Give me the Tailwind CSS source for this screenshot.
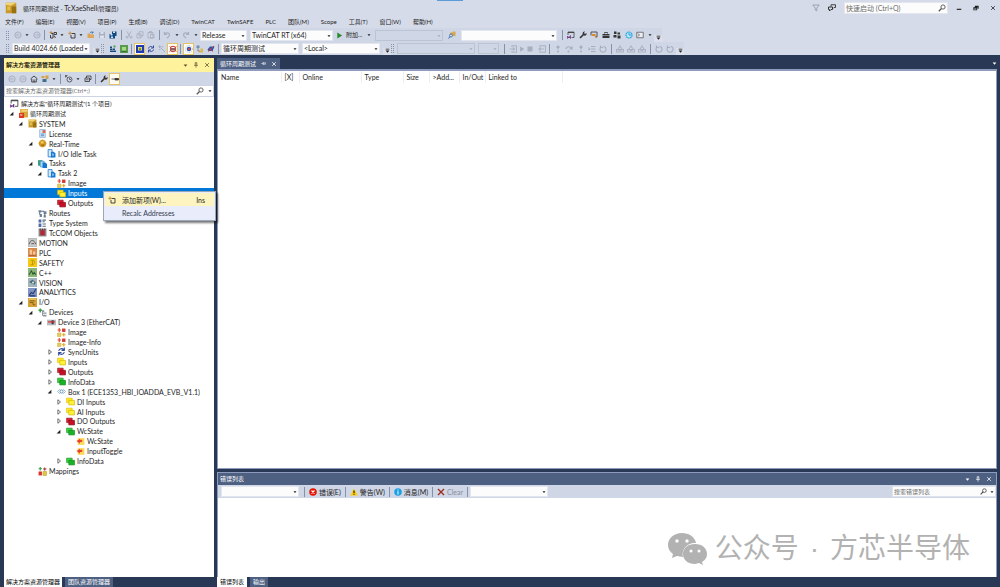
<!DOCTYPE html>
<html lang="zh-CN">
<head>
  <meta charset="UTF-8" />
  <meta name="viewport" content="width=device-width, initial-scale=1.0" />
  <title>循环周期测试 - TcXaeShell(管理员)</title>
  <script src="https://cdn.jsdelivr.net/npm/@tailwindcss/browser@4"></script>
</head>
<body class="flex h-screen flex-col overflow-hidden bg-[#293955] font-['Lato','Noto_Sans_CJK_SC',sans-serif] text-[7px] leading-[10px] text-[#1e1e1e]">

  <!-- Icon sprite -->
  <svg class="hidden">
    <symbol id="caret" viewBox="0 0 8 8"><path d="M1 2.5h6L4 6z" fill="currentColor"/></symbol>
    <symbol id="more" viewBox="0 0 8 8"><path d="M1 1h6v1.3H1zM1 4h6L4 7.5z" fill="currentColor"/></symbol>
    <symbol id="close" viewBox="0 0 16 16"><path d="M3 3l10 10M13 3L3 13" stroke="currentColor" stroke-width="2"/></symbol>
    <symbol id="pin" viewBox="0 0 16 16"><path d="M5 2h6M6 2v7M10 2v7M3 9h10M8 9v6" stroke="currentColor" stroke-width="1.8" fill="none"/></symbol>
    <symbol id="search" viewBox="0 0 16 16"><circle cx="10" cy="6" r="4.2" fill="none" stroke="currentColor" stroke-width="1.8"/><path d="M7 9l-5.5 5.5" stroke="currentColor" stroke-width="2.4"/></symbol>
    <symbol id="min" viewBox="0 0 16 16"><path d="M2 10h12v3H2z" fill="currentColor"/></symbol>
    <symbol id="restore" viewBox="0 0 16 16"><path d="M5 2h10v8h-3V6H5zM1 6h10v8H1z" fill="currentColor"/><path d="M3 9.5h6V12H3z" fill="#d6dbe9"/></symbol>
    <symbol id="filter" viewBox="0 0 16 16"><path d="M1.5 2h13L9.5 8v6l-3-2V8z" fill="none" stroke="#8b92a5" stroke-width="1.5"/></symbol>
    <symbol id="feedback" viewBox="0 0 16 16"><path d="M6 5V1.5h9V7h-3l-2 2" fill="none" stroke="#333" stroke-width="1.8"/><path d="M1 6h8v5H6l-3 3v-3H1z" fill="none" stroke="#333" stroke-width="2"/></symbol>
    <symbol id="back" viewBox="0 0 16 16"><circle cx="8" cy="8" r="6" fill="none" stroke="#adb3c3" stroke-width="2.4"/><path d="M11.5 8H5m3-3L5 8l3 3" fill="none" stroke="#adb3c3" stroke-width="1.8"/></symbol>
    <symbol id="fwd" viewBox="0 0 16 16"><circle cx="8" cy="8" r="6" fill="none" stroke="#adb3c3" stroke-width="2.4"/><path d="M4.500 8H11M8 5l3 3-3 3" fill="none" stroke="#adb3c3" stroke-width="1.8"/></symbol>
    <symbol id="newproj" viewBox="0 0 16 16"><path d="M4 5h4v9H3V8m7-5h5v4h-5zM10 9l3 5" fill="none" stroke="#333" stroke-width="1.8"/><path d="M4 0v6M1 3h6" stroke="#c58a35" stroke-width="1.8"/></symbol>
    <symbol id="newitem" viewBox="0 0 16 16"><path d="M7 5h7v9H6V8" fill="none" stroke="#333" stroke-width="1.8"/><path d="M4 1v7M.5 4.500h7" stroke="#c58a35" stroke-width="1.8"/></symbol>
    <symbol id="open" viewBox="0 0 16 16"><path d="M1 5h5l1 2h7v7H1z" fill="#dba75a"/><path d="M6 4c1-3 5-3 6 0m0-3v3H9" fill="none" stroke="#2b6cb0" stroke-width="1.6"/></symbol>
    <symbol id="save" viewBox="0 0 16 16"><path d="M2 2h12v12H2z" fill="#a9afc0"/><path d="M5 2h6v4H5zM4 9h8v5H4z" fill="#dde1ec"/></symbol>
    <symbol id="saveall" viewBox="0 0 16 16"><path d="M6 1h9v9h-3v5H1V6h5z" fill="#0c4b86"/><path d="M8 1h4v3H8zM3 6h4v3H3zM4 11h4v3H4z" fill="#dde1ec"/></symbol>
    <symbol id="cut" viewBox="0 0 16 16"><path d="M4 1l6 10M12 1L6 11" stroke="#adb3c3" stroke-width="2"/><circle cx="4" cy="12.500" r="2" fill="none" stroke="#adb3c3" stroke-width="2"/><circle cx="12" cy="12.500" r="2" fill="none" stroke="#adb3c3" stroke-width="2"/></symbol>
    <symbol id="copy" viewBox="0 0 16 16"><path d="M6 1.500h8V10H6zM2 5.500h8V14H2z" fill="#d3d9e7" stroke="#adb3c3" stroke-width="2"/></symbol>
    <symbol id="paste" viewBox="0 0 16 16"><path d="M2 3h10v11H2zM5 1h4v3H5zM7 7h7v7H7z" fill="#d3d9e7" stroke="#adb3c3" stroke-width="2"/></symbol>
    <symbol id="undo" viewBox="0 0 16 16"><path d="M3 2v5h5M3 7c3-5 10-4 10 1 0 3-3 4-5 6" fill="none" stroke="#a7aec0" stroke-width="2.400"/></symbol>
    <symbol id="redo" viewBox="0 0 16 16"><path d="M13 2v5H8M13 7C10 2 3 3 3 8c0 3 3 4 5 6" fill="none" stroke="#a7aec0" stroke-width="2.400"/></symbol>
    <symbol id="play" viewBox="0 0 16 16"><path d="M3 1l11 7-11 7z" fill="currentColor"/></symbol>
    <symbol id="find" viewBox="0 0 16 16"><path d="M4 3h5l1-2h5v9H4z" fill="#d9a64f"/><circle cx="6" cy="9" r="3" fill="#d6dbe9" stroke="#2b6ca8" stroke-width="1.6"/><path d="M4 11l-3 4" stroke="#2b6ca8" stroke-width="2"/></symbol>
    <symbol id="vswin" viewBox="0 0 16 16"><path d="M2 8V2h12v11H9" fill="none" stroke="#444" stroke-width="1.6"/><path d="M2 3h12" stroke="#444" stroke-width="2"/><path d="M1 10l3 3 3-4v6l-3-3-3 3z" fill="#68217a" stroke="#68217a"/></symbol>
    <symbol id="wrench" viewBox="0 0 16 16"><path d="M2 14l7-7" stroke="#333" stroke-width="3.200"/><path d="M8 2c2-2 4-1 4-1L10 4l2 2 3-2c1 4-2 6-5 5L7 6z" fill="#333"/></symbol>
    <symbol id="toolwin" viewBox="0 0 16 16"><path d="M2 9V2h12v10h-3" fill="none" stroke="#444" stroke-width="1.800"/><path d="M4 6h7v3l3 5-3-1-2-3H4z" fill="#d98a2b"/></symbol>
    <symbol id="toolbox" viewBox="0 0 16 16"><path d="M5 5V3h6v2" fill="none" stroke="#333" stroke-width="1.600"/><path d="M1 6h14v3H1zM1 10h14v4H1z" fill="#333"/></symbol>
    <symbol id="blocks" viewBox="0 0 16 16"><path d="M2 1h5v5H2zM9 3h5v4H9zM1 8h6v5H1zM9 9h6v6H9z" fill="#333"/></symbol>
    <symbol id="globe" viewBox="0 0 16 16"><circle cx="8" cy="8" r="6" fill="#bfe7f8" stroke="#1ba1e2" stroke-width="2.400" stroke-dasharray="3 1"/><path d="M8 4v4h5" fill="none" stroke="#1ba1e2" stroke-width="2"/></symbol>
    <symbol id="console" viewBox="0 0 16 16"><path d="M1.500 2.500h13v11h-13z" fill="#e9ecf4" stroke="#555" stroke-width="1.500"/><path d="M4 5l3 3-3 3" fill="none" stroke="#444" stroke-width="1.500"/></symbol>
    <symbol id="activate" viewBox="0 0 16 16"><path d="M2 3h4v3H2zM2 7h4v3H2zM2 11h12v3H2zM7 7h5v3H7z" fill="#164a7a"/><path d="M9 1h4v4H9z" fill="#4a9a55"/></symbol>
    <symbol id="target" viewBox="0 0 16 16"><path d="M0 0h16v16H0z" fill="#5a9a50"/><path d="M4 4h8v7H4z" fill="#a5dc7c"/><path d="M3 12h10v2H3z" fill="#356d37"/></symbol>
    <symbol id="runmode" viewBox="0 0 16 16"><path d="M0 0h16v16H0z" fill="#2339b5"/><path d="M4 4h8v7H4z" fill="#dce36c"/><circle cx="8" cy="8" r="2.500" fill="#7d9330"/></symbol>
    <symbol id="sync" viewBox="0 0 16 16"><path d="M3 7c1-5 7-5 9-2m1-4v5H8M13 9c-1 5-7 5-9 2m-1 4v-5h5" fill="none" stroke="#304a9b" stroke-width="2"/></symbol>
    <symbol id="wand" viewBox="0 0 16 16"><path d="M5 5l9 9M3 1v5M1 3h5M10 2l-2 3M2 10l3-2" stroke="#a7aec0" stroke-width="2"/></symbol>
    <symbol id="free" viewBox="0 0 16 16"><circle cx="8" cy="8" r="5.500" fill="none" stroke="#c93535" stroke-width="2"/><path d="M4 6h8v5H4z" fill="#7f6a6a"/><path d="M1 3l3 2M15 3l-3 2M1 13l3-2M15 13l-3-2" stroke="#c93535" stroke-width="1.600"/></symbol>
    <symbol id="scan" viewBox="0 0 16 16"><circle cx="8" cy="8" r="4.500" fill="#2d57b5"/><circle cx="8" cy="8" r="6.800" fill="none" stroke="#8a9ed2" stroke-width="1.400" stroke-dasharray="2 2"/><path d="M6 6h4v4H6z" fill="#c34b4b"/></symbol>
    <symbol id="link" viewBox="0 0 16 16"><path d="M1 1h6v5H1z" fill="#7b8bb0"/><path d="M9 7h5v4H9zM6 11h8v4H6z" fill="#dcb84c"/><path d="M4 6v6h3" fill="none" stroke="#667" stroke-width="1.400"/></symbol>
    <symbol id="stoplink" viewBox="0 0 16 16"><path d="M1 9l5-6h9l-4 9H3z" fill="#1f56b0"/><path d="M2 13L14 2M5 7l7 6" stroke="#d23b3b" stroke-width="2"/></symbol>
    <symbol id="login" viewBox="0 0 16 16"><path d="M6 4V1.500h9v13H6V12M1 8h10M8 5l3 3-3 3" fill="none" stroke="#adb3c3" stroke-width="2.200"/></symbol>
    <symbol id="logout" viewBox="0 0 16 16"><path d="M4 4V1.500h11v13H4V12M12 8H2m3-3L2 8l3 3" fill="none" stroke="#adb3c3" stroke-width="2.200"/></symbol>
    <symbol id="stop" viewBox="0 0 16 16"><path d="M3 3h10v10H3z" fill="#a7aec0"/></symbol>
    <symbol id="stepin" viewBox="0 0 16 16"><path d="M8 1v8M5 5l3-3 3 3" stroke="#a7aec0" stroke-width="2.400" fill="none"/><circle cx="8" cy="13" r="2" fill="#a7aec0"/></symbol>
    <symbol id="stepover" viewBox="0 0 16 16"><path d="M2 8c1-6 10-6 11 0M14 3v5H9" stroke="#a7aec0" stroke-width="2.400" fill="none"/><circle cx="7" cy="13" r="2" fill="#a7aec0"/></symbol>
    <symbol id="lines" viewBox="0 0 16 16"><path d="M6 3h9M6 8h9M6 13h9" stroke="#a7aec0" stroke-width="2.200"/><path d="M1 4l4 4-4 4z" fill="#a7aec0"/></symbol>
    <symbol id="cycle" viewBox="0 0 16 16"><path d="M4 4a6 6 0 1 0 8 0M3 1v4h5M9 3l4 1" fill="none" stroke="#a7aec0" stroke-width="2.200"/></symbol>
    <symbol id="house" viewBox="0 0 16 16"><path d="M1 9h14v5H1zM4 8l4-6 4 6" fill="none" stroke="#adb3c3" stroke-width="2.200"/><path d="M5 9h6v3H5z" fill="#adb3c3"/></symbol>
    <symbol id="home" viewBox="0 0 16 16"><path d="M1 8l7-6 7 6M3.500 8v6h9V8" fill="none" stroke="#333" stroke-width="1.800"/><path d="M7 9h2v5H7z" fill="#333"/></symbol>
    <symbol id="view" viewBox="0 0 16 16"><path d="M1 2h6v4H1zM9 1h6v7H9z" fill="#d3a24c"/><path d="M3 8h8v6H3z" fill="#3d7091"/></symbol>
    <symbol id="pending" viewBox="0 0 16 16"><circle cx="9" cy="9" r="5" fill="none" stroke="#444" stroke-width="1.600"/><path d="M9 6v3h3M1 1l4 4M1 5V1h4" fill="none" stroke="#444" stroke-width="1.500"/></symbol>
    <symbol id="collapse" viewBox="0 0 16 16"><path d="M5 6V2h9v7h-3M2 6h9v7H2z" fill="none" stroke="#444" stroke-width="1.800"/><path d="M4 9.500h5" stroke="#444" stroke-width="1.500"/></symbol>
    <symbol id="dash" viewBox="0 0 16 16"><path d="M1 8h14M8 7h7v3H8z" stroke="#333" stroke-width="1.500" fill="#333"/></symbol>
    <symbol id="err" viewBox="0 0 16 16"><circle cx="8" cy="8" r="7.500" fill="#e41300"/><path d="M5 5l6 6M11 5l-6 6" stroke="#fff" stroke-width="2.200"/></symbol>
    <symbol id="warn" viewBox="0 0 16 16"><path d="M8 1l7.500 14H.5z" fill="#fc0"/><path d="M7 5h2v5H7zM7 11.500h2v2H7z" fill="#000"/></symbol>
    <symbol id="info" viewBox="0 0 16 16"><circle cx="8" cy="8" r="7.500" fill="#1ba1e2"/><path d="M7 3h2v2H7zM7 6.500h2V13H7z" fill="#fff"/></symbol>
    <symbol id="clear" viewBox="0 0 16 16"><path d="M2 2l12 12M14 2L2 14" stroke="#9b2b1c" stroke-width="2.600"/></symbol>
    <!-- tree icons -->
    <symbol id="logo" viewBox="0 0 16 16"><path d="M1 1h14v14H1z" fill="#c79a2b"/><path d="M1 1h14L8 5 1 4z" fill="#f0d377"/><path d="M9 6h6v9H9z" fill="#9a7013"/><path d="M3 6h4v5H3z" fill="#e6bd4e"/></symbol>
    <symbol id="project" viewBox="0 0 16 16"><path d="M2 0h14v15H2z" fill="#d6a93a"/><path d="M4 1h11v4H4z" fill="#f0d377"/><path d="M0 7h9v9H0z" fill="#d93a20"/><path d="M2 9h4v3H2z" fill="#f7a48a"/></symbol>
    <symbol id="license" viewBox="0 0 16 16"><path d="M3 1h10v14H3z" fill="#d9e9f8" stroke="#6b9ac6"/><path d="M5 9h6M5 12h6" stroke="#3b7dc4" stroke-width="1.500"/><path d="M8 2h5v5H8z" fill="#e0664c"/></symbol>
    <symbol id="gear" viewBox="0 0 16 16"><path d="M8 1l5 2 2 5-2 5-5 2-5-2-2-5 2-5z" fill="#cf9620"/><path d="M5 4h5v4H5z" fill="#f3cb5c"/><path d="M6 11h5" stroke="#946511" stroke-width="2"/></symbol>
    <symbol id="task" viewBox="0 0 16 16"><path d="M2 1h7v13H2z" fill="#dbeafa" stroke="#2a7fd0" stroke-width="1.500"/><path d="M7 5h5l3 3v7H7z" fill="#1579d1"/><path d="M9 8h3v4H9z" fill="#8cc7f5"/></symbol>
    <symbol id="tasks" viewBox="0 0 16 16"><path d="M0 2h8v10H0z" fill="#3f9e7e"/><path d="M4 4h7v10H4z" fill="#b9dcf5" stroke="#2a7fd0"/><path d="M8 6h5l3 3v7H8z" fill="#1579d1"/></symbol>
    <symbol id="image" viewBox="0 0 16 16"><path d="M9 1h6v6H9z" fill="#d23a32"/><path d="M1 9h6v6H1z" fill="#e8cf60" stroke="#c9a732"/><path d="M4 0v7M1 3.500h6" stroke="#e24a32" stroke-width="2"/><path d="M12 9v6M9 12h6" stroke="#e9a820" stroke-width="2"/></symbol>
    <symbol id="ystack" viewBox="0 0 16 16"><path d="M1 2h10v8H1z" fill="#ffeb1c" stroke="#d8b800"/><path d="M5 6h10v8H5z" fill="#fff23a" stroke="#d8b800" stroke-width="1.300"/></symbol>
    <symbol id="rstack" viewBox="0 0 16 16"><path d="M1 2h10v8H1z" fill="#dc1f32" stroke="#8c0c1a"/><path d="M5 6h10v8H5z" fill="#c90f26" stroke="#8c0c1a" stroke-width="1.300"/></symbol>
    <symbol id="gstack" viewBox="0 0 16 16"><path d="M1 2h10v8H1z" fill="#39d242" stroke="#178a20"/><path d="M5 6h10v8H5z" fill="#17b526" stroke="#178a20" stroke-width="1.300"/></symbol>
    <symbol id="routes" viewBox="0 0 16 16"><path d="M1 2h5v4H1zM10 4h5v5h-5zM3 9h4v5H3zM10 11h4v4h-4z" fill="#6c8296"/><path d="M3 6v4M12 8v4M6 4h5" stroke="#38506a" stroke-width="1.500"/></symbol>
    <symbol id="types" viewBox="0 0 16 16"><path d="M1 1h5v5H1zM1 8h5v6H1z" fill="#506dab"/><path d="M8 2h6M8 5h4M8 9h6M8 13h6" stroke="#5b6c80" stroke-width="1.800"/></symbol>
    <symbol id="tccom" viewBox="0 0 16 16"><path d="M1 1h14v14H1z" fill="#8c8588"/><path d="M4 4h8v9H4z" fill="#b02835"/><path d="M4 1v3M8 1v3M12 1v3" stroke="#402d32" stroke-width="1.500"/></symbol>
    <symbol id="motion" viewBox="0 0 16 16"><path d="M.5.500h15v15H.5z" fill="#c8c9ca" stroke="#999"/><path d="M2 11c3-9 8-9 12 0M6 10h5" stroke="#555" stroke-width="1.600" fill="none"/></symbol>
    <symbol id="plc" viewBox="0 0 16 16"><path d="M0 0h16v16H0z" fill="#d98a4a"/><path d="M3 3h4v9H3zM9 6h4v6H9z" fill="#f6c99d"/><path d="M2 13h12" stroke="#a65626" stroke-width="1.500"/></symbol>
    <symbol id="safety" viewBox="0 0 16 16"><path d="M0 0h16v16H0z" fill="#f5c816"/><path d="M5 4h5l2 4-3 4H4m4-8v8" fill="none" stroke="#c09408" stroke-width="1.600"/></symbol>
    <symbol id="cpp" viewBox="0 0 16 16"><path d="M0 0h16v16H0z" fill="#8cb57a"/><path d="M2 12l4-7 3 6 2-3 3 4" fill="none" stroke="#2d592d" stroke-width="1.800"/></symbol>
    <symbol id="vision" viewBox="0 0 16 16"><path d="M0 0h16v16H0z" fill="#9fb4bb"/><path d="M2 7l6-4 6 5-3 4z" fill="#4b6872"/><circle cx="9" cy="8" r="2" fill="#cfe1e6"/></symbol>
    <symbol id="analytics" viewBox="0 0 16 16"><path d="M0 0h16v16H0z" fill="#7f93c2"/><path d="M2 13l4-5 3 2 5-8M3 14h10" fill="none" stroke="#23376d" stroke-width="1.800"/></symbol>
    <symbol id="io" viewBox="0 0 16 16"><path d="M0 0h16v16H0z" fill="#d4a238"/><path d="M3 5h9M3 8h6v4h4" fill="none" stroke="#855c0e" stroke-width="1.600"/><path d="M2 1h12v2H2z" fill="#f2d37a"/></symbol>
    <symbol id="devices" viewBox="0 0 16 16"><path d="M4 1v7M1 4h6" stroke="#359c45" stroke-width="2.400"/><path d="M7 4h4v3H7zM9 8h6v2H9zM9 12h6v3H9z" fill="#8a949d"/><path d="M8 7v7" stroke="#667" stroke-width="1.200"/></symbol>
    <symbol id="device" viewBox="0 0 16 16"><path d="M0 3h16v10H0z" fill="#b8bbbf"/><path d="M8 4h4v7H8z" fill="#43464a"/><path d="M2 7h12" stroke="#d22" stroke-width="2"/></symbol>
    <symbol id="box" viewBox="0 0 16 16"><path d="M5 4L1 8l4 4M11 4l4 4-4 4" fill="none" stroke="#88a7bd" stroke-width="1.500"/><circle cx="8" cy="8" r="2.800" fill="none" stroke="#4a86b0" stroke-width="1.500"/></symbol>
    <symbol id="var" viewBox="0 0 16 16"><path d="M3 2h12v12H3z" fill="#ffd95a"/><path d="M1 7l6-4v2h4v4H7v3z" fill="#e9432a"/></symbol>
    <symbol id="mappings" viewBox="0 0 16 16"><path d="M1 8h6v7H1z" fill="#d93434"/><path d="M9 8h6v7H9z" fill="#e8c73b" stroke="#b89624"/><path d="M4 0v6M1 3h6" stroke="#36a046" stroke-width="2"/><path d="M12 1v5M9 3.500h6" stroke="#a33" stroke-width="2"/></symbol>
    <symbol id="opened" viewBox="0 0 8 8"><path d="M7 1v6H1z" fill="#222"/></symbol>
    <symbol id="closed" viewBox="0 0 8 8"><path d="M2.500 1L6 4 2.500 7z" fill="#fff" stroke="#444"/></symbol>
  </svg>

  <header class="relative shrink-0 bg-[#d6dbe9]">
    <div class="absolute top-0 left-[437px] h-px w-[26px] bg-[#5b9bd8]"></div>
    <!-- Title bar -->
    <div class="flex h-4 items-center gap-2 pr-1 pl-[5px]">
      <div class="flex flex-1 items-center gap-[6px]">
        <svg class="size-3"><use href="#logo"/></svg>
        <h1 class="text-[6px]">循环周期测试 - <span class="text-[7px]">TcXaeShell</span>(管理员)</h1>
      </div>
      <div class="flex w-6 justify-between">
        <button aria-label="筛选"><svg class="size-2"><use href="#filter"/></svg></button>
        <button aria-label="反馈"><svg class="size-2"><use href="#feedback"/></svg></button>
      </div>
      <label class="flex h-3 w-[104px] items-center border border-[#e3e6ee] bg-[#fcfcfc] px-[1px]">
        <input aria-label="快速启动" placeholder="快速启动 (Ctrl+Q)" class="min-w-0 flex-1 outline-none placeholder:text-[#6d6d6d]" />
        <svg class="size-2 text-[#555]"><use href="#search"/></svg>
      </label>
      <div class="flex w-[40px] justify-between">
        <button aria-label="最小化"><svg class="size-[6px]"><use href="#min"/></svg></button>
        <button aria-label="还原"><svg class="size-[6px]"><use href="#restore"/></svg></button>
        <button aria-label="关闭"><svg class="size-[6px]"><use href="#close"/></svg></button>
      </div>
    </div>

    <nav class="flex h-3 items-center gap-3 pl-[5px] text-[6px] whitespace-nowrap">
      <button>文件(F)</button><button>编辑(E)</button><button>视图(V)</button><button>项目(P)</button>
      <button>生成(B)</button><button>调试(D)</button><button>TwinCAT</button><button>TwinSAFE</button>
      <button>PLC</button><button>团队(M)</button><button>Scope</button><button>工具(T)</button>
      <button>窗口(W)</button><button>帮助(H)</button>
    </nav>

    <!-- Toolbars, filled in by the script below -->
    <div id="bar1" class="mr-auto flex h-[14px] w-fit items-center bg-[#cfd6e5] pl-[6px]"></div>
    <div id="bar2" class="mr-auto flex h-[13px] w-fit items-center bg-[#cfd6e5] pl-[6px]"></div>
  </header>

  <main class="flex min-h-0 flex-1 gap-[3px] pt-[3px] pr-[3px] pl-1">
    <!-- Solution explorer -->
    <section class="flex w-[210px] shrink-0 flex-col">
      <div class="flex h-[14px] items-center gap-[5px] bg-[#fff29d] px-[2px] text-[#55502f]">
        <h2 class="flex-1 text-[6px] font-medium text-black">解决方案资源管理器</h2>
        <button aria-label="窗口位置"><svg class="size-[5px]"><use href="#caret"/></svg></button>
        <button aria-label="自动隐藏"><svg class="size-[6px]"><use href="#pin"/></svg></button>
        <button aria-label="关闭" class="pr-[2px]"><svg class="size-[6px]"><use href="#close"/></svg></button>
      </div>
      <div id="treebar" class="flex h-[13px] items-center bg-[#cfd6e5] pl-[2px]"></div>
      <label class="flex h-3 items-center gap-1 border border-[#ccd3e2] bg-white px-[1px]">
        <input aria-label="搜索解决方案资源管理器" placeholder="搜索解决方案资源管理器(Ctrl+;)" class="min-w-0 flex-1 text-[6px] outline-none placeholder:text-[#6d6d6d]" />
        <svg class="size-2 text-[#555]"><use href="#search"/></svg>
        <svg class="size-[4px]"><use href="#caret"/></svg>
      </label>
      <div class="relative min-h-0 flex-1 bg-white pt-[2px]">
        <ul id="tree" role="tree" class="grid h-[377px] auto-rows-fr"></ul>
        <!-- Context menu -->
        <div role="menu" class="absolute top-[94px] left-[99px] z-10 w-[113px] border border-[#9ba7b7] bg-[#e9edfb] p-px shadow-[2px_2px_2px_#0008]">
          <button role="menuitem" class="flex h-[13px] w-full items-center bg-[#fdf4bf] pr-[9px] pl-[3px] text-left">
            <svg class="mr-[6px] size-2"><use href="#newitem"/></svg><span class="flex-1">添加新项(W)...</span><span>Ins</span>
          </button>
          <button role="menuitem" class="flex h-[13px] w-full items-center pl-[17px] text-left text-[#333a4d]">Recalc Addresses</button>
        </div>
      </div>
      <div class="flex h-[10px] text-[6px]">
        <button class="bg-white px-[2px] text-black">解决方案资源管理器</button>
        <button class="ml-[3px] bg-[#4d6082] px-[3px] text-white">团队资源管理器</button>
      </div>
    </section>

    <div class="flex min-w-0 flex-1 flex-col">
      <!-- Document -->
      <div class="flex h-[11px] items-center justify-between">
        <div class="flex h-full items-center gap-[5px] bg-[#4d6082] px-[3px] text-white">
          <button class="text-[6px]">循环周期测试</button>
          <button aria-label="固定" class="rotate-90"><svg class="size-[5px]"><use href="#pin"/></svg></button>
          <button aria-label="关闭"><svg class="size-[6px]"><use href="#close"/></svg></button>
        </div>
        <button aria-label="文档列表" class="text-white"><svg class="size-[5px]"><use href="#caret"/></svg></button>
      </div>
      <div class="min-h-0 flex-1 border border-t-2 border-[#8e9bbc] bg-white">
        <table class="w-[345px] table-fixed text-left">
          <thead>
            <tr class="h-3">
              <th class="w-[63px] border-r border-[#eee] pl-[3px] font-normal">Name</th>
              <th class="w-[18px] border-r border-[#eee] pl-[3px] font-normal">[X]</th>
              <th class="w-[62px] border-r border-[#eee] pl-[3px] font-normal">Online</th>
              <th class="w-[42px] border-r border-[#eee] pl-[3px] font-normal">Type</th>
              <th class="w-[26px] border-r border-[#eee] pl-[3px] font-normal">Size</th>
              <th class="w-[30px] border-r border-[#eee] pl-[3px] font-normal">&gt;Add...</th>
              <th class="w-[26px] border-r border-[#eee] pl-[3px] font-normal">In/Out</th>
              <th class="border-r border-[#eee] pl-[3px] font-normal">Linked to</th>
            </tr>
          </thead>
        </table>
      </div>

      <!-- Error list -->
      <section class="relative mt-[3px] flex h-[105px] shrink-0 flex-col border border-b-0 border-[#8e9bbc]">
        <div class="flex h-3 items-center gap-[5px] bg-[#4d6082] px-[2px] text-white">
          <h2 class="flex-1 text-[6px]">错误列表</h2>
          <button aria-label="窗口位置"><svg class="size-[5px]"><use href="#caret"/></svg></button>
          <button aria-label="自动隐藏"><svg class="size-[6px]"><use href="#pin"/></svg></button>
          <button aria-label="关闭" class="pr-[2px]"><svg class="size-[6px]"><use href="#close"/></svg></button>
        </div>
        <div class="flex h-[13px] items-center bg-[#cfd6e5] pl-[3px]">
          <div id="errbar" class="flex flex-1 items-center"></div>
          <label class="flex h-[11px] w-[104px] items-center gap-[3px] border border-[#dfe3ec] bg-[#fcfcfc] px-[1px]">
            <input aria-label="搜索错误列表" placeholder="搜索错误列表" class="min-w-0 flex-1 text-[6px] outline-none placeholder:text-[#6d6d6d]" />
            <svg class="size-[7px] text-[#444]"><use href="#search"/></svg>
            <svg class="size-[4px]"><use href="#caret"/></svg>
          </label>
        </div>
        <div class="flex-1 bg-white"></div>
        <div class="absolute right-[26px] bottom-2 flex items-center gap-2 text-[28px] leading-[40px] whitespace-nowrap text-[#b2b2b2]">
          <svg class="h-8 w-[39px]" viewBox="0 0 39 32">
            <path d="M14 0C6 0 0 5 0 12c0 4 2 7 5 9l-1 4 5-2 6 1c-2-8 5-15 13-14C27 4 21 0 14 0z" fill="currentColor"/>
            <path d="M27 11c-7 0-12 4-12 10s5 10 12 10l4-1 4 2-1-3c3-2 5-4 5-8 0-6-5-10-12-10z" fill="currentColor"/>
            <g fill="#fff"><circle cx="9" cy="8" r="1.700"/><circle cx="19" cy="8" r="1.700"/><circle cx="23" cy="18" r="1.500"/><circle cx="31" cy="18" r="1.500"/></g>
          </svg>
          <p class="flex gap-[11px] font-['Liberation_Sans','Noto_Sans_CJK_SC',sans-serif]"><span>公众号</span><span>·</span><span>方芯半导体</span></p>
        </div>
      </section>
      <div class="flex h-[10px] text-[6px]">
        <button class="bg-white px-[3px] text-black">错误列表</button>
        <button class="ml-[3px] bg-[#4d6082] px-[3px] text-white">输出</button>
      </div>
    </div>
  </main>

  <script>
    const svg = (id, cls) => `<svg class="${cls}"><use href="#${id}"/></svg>`;

    // Toolbar pieces
    const icon = id => `<button aria-label="${id}" class="flex w-[11px] shrink-0 justify-center">${svg(id, 'size-2')}</button>`;
    const on = id => `<button aria-label="${id}" aria-pressed="true" class="flex w-[11px] shrink-0 justify-center border border-[#e5c365] bg-[#fffcf4] py-px">${svg(id, 'size-2')}</button>`;
    const caret = `<span class="flex w-2 shrink-0 justify-center">${svg('caret', 'size-1')}</span>`;
    const more = `<span class="flex w-2 shrink-0 justify-center self-end bg-[#dce0ec] pb-[2px]">${svg('more', 'size-[5px]')}</span>`;
    const sep = '<span class="mx-[2px] h-[10px] w-px shrink-0 bg-[#8591a9]"></span>';
    const grip = '<span class="mr-[3px] h-[9px] w-[3px] shrink-0 border-x border-dotted border-[#8793ab]"></span>';
    const group = (w, ...items) => `<div class="flex ${w} shrink-0 items-center justify-between">${items.join('')}</div>`;
    const combo = (w, text, label) => `<span class="relative mr-[3px] flex ${w} shrink-0">
      <select aria-label="${label}" class="h-[11px] w-full appearance-none border border-[#e3e6ee] bg-[#fcfcfc] pl-[1px] leading-[9px] outline-none"><option>${text}</option></select>
      ${svg('caret', 'pointer-events-none absolute top-[4px] right-[2px] size-1')}</span>`;
    const off = (w, label) => `<span class="relative mr-[3px] flex ${w} shrink-0 text-[#a0a7b8]">
      <select aria-label="${label}" disabled class="h-[11px] w-full appearance-none border border-[#bcc4d4]"></select>
      ${svg('caret', 'pointer-events-none absolute top-[4px] right-[2px] size-1')}</span>`;

    document.getElementById('bar1').innerHTML = [
      grip,
      group('w-[188px]', icon('back'), caret, icon('fwd'), sep, icon('newproj'), caret, icon('newitem'), caret, icon('open'),
        icon('save'), icon('saveall'), sep, icon('cut'), icon('copy'), icon('paste'), sep, icon('undo'), caret, icon('redo'), caret),
      combo('w-[47px]', 'Release', '解决方案配置'),
      combo('w-[83px]', 'TwinCAT RT (x64)', '解决方案平台'),
      `<button class="mr-[1px] flex w-[38px] shrink-0 items-center gap-[3px] whitespace-nowrap">${svg('play', 'size-[7px] text-[#2a8a2a]')}<span class="text-[6px]">附加...</span>${svg('caret', 'ml-[2px] size-1')}</button>`,
      off('w-[68px]', '进程'),
      group('w-[15px]', icon('find')),
      combo('w-[96px]', '', '查找'),
      group('w-[94px]', sep, icon('vswin'), icon('wrench'), icon('toolwin'), icon('toolbox'), icon('blocks'), icon('globe'), icon('console'), caret),
      more
    ].join('');

    document.getElementById('bar2').innerHTML = [
      grip,
      combo('w-[78px]', 'Build 4024.66 (Loaded', 'TwinCAT 版本'),
      more,
      group('w-[120px]', grip, icon('activate'), icon('target'), sep, on('runmode'), icon('sync'), icon('wand'), on('free'), sep, on('scan'), icon('link'), icon('stoplink'), sep),
      combo('w-[78px]', '循环周期测试', '项目'),
      combo('w-[78px]', '&lt;Local&gt;', '目标系统'),
      more,
      grip,
      off('w-[78px]', 'PLC 实例'),
      off('w-[21px]', '任务'),
      group('w-[174px]', sep, icon('login'), `<span class="text-[#a7aec0]">${svg('play', 'size-[6px]')}</span>`, icon('stop'), icon('logout'), sep,
        icon('stepin'), icon('stepover'), icon('stepin'), icon('lines'), icon('cycle'), sep,
        icon('house'), icon('house'), icon('house'), sep, icon('cycle'), icon('cycle')),
      more
    ].join('');

    document.getElementById('treebar').innerHTML = [
      icon('back'), icon('fwd'), icon('home'), icon('view'), caret, sep,
      icon('pending'), caret, icon('collapse'), sep, icon('wrench'), on('dash')
    ].join('');

    const filterBtn = (id, text) => `<button class="flex shrink-0 items-center gap-[2px] px-[2px] whitespace-nowrap">${svg(id, 'size-2')}<span>${text}</span></button>`;
    document.getElementById('errbar').innerHTML = [
      combo('w-[78px]', '', '范围'), sep, filterBtn('err', '错误(E)'), sep, filterBtn('warn', '警告(W)'), sep,
      filterBtn('info', '消息(M)'), sep, `<span class="text-[#8b909d]">${filterBtn('clear', 'Clear')}</span>`, sep,
      combo('w-[78px]', '', '来源')
    ].join('');

    // Project tree: depth, icon, label, state (o = open, c = closed, s = selected)
    const nodes = [
      [0, 'vswin', '解决方案"循环周期测试"(1 个项目)'],
      [1, 'project', '循环周期测试', 'o'],
      [2, 'logo', 'SYSTEM', 'o'],
      [3, 'license', 'License'],
      [3, 'gear', 'Real-Time', 'o'],
      [4, 'task', 'I/O Idle Task'],
      [3, 'tasks', 'Tasks', 'o'],
      [4, 'task', 'Task 2', 'o'],
      [5, 'image', 'Image'],
      [5, 'ystack', 'Inputs', 's'],
      [5, 'rstack', 'Outputs'],
      [3, 'routes', 'Routes'],
      [3, 'types', 'Type System'],
      [3, 'tccom', 'TcCOM Objects'],
      [2, 'motion', 'MOTION'],
      [2, 'plc', 'PLC'],
      [2, 'safety', 'SAFETY'],
      [2, 'cpp', 'C++'],
      [2, 'vision', 'VISION'],
      [2, 'analytics', 'ANALYTICS'],
      [2, 'io', 'I/O', 'o'],
      [3, 'devices', 'Devices', 'o'],
      [4, 'device', 'Device 3 (EtherCAT)', 'o'],
      [5, 'image', 'Image'],
      [5, 'image', 'Image-Info'],
      [5, 'sync', 'SyncUnits', 'c'],
      [5, 'ystack', 'Inputs', 'c'],
      [5, 'rstack', 'Outputs', 'c'],
      [5, 'gstack', 'InfoData', 'c'],
      [5, 'box', 'Box 1 (ECE1353_HBI_IOADDA_EVB_V1.1)', 'o'],
      [6, 'ystack', 'DI Inputs', 'c'],
      [6, 'ystack', 'AI Inputs', 'c'],
      [6, 'rstack', 'DO Outputs', 'c'],
      [6, 'gstack', 'WcState', 'o'],
      [7, 'var', 'WcState'],
      [7, 'var', 'InputToggle'],
      [6, 'gstack', 'InfoData', 'c'],
      [3, 'mappings', 'Mappings']
    ];
    const indent = ['pl-[6px]', 'pl-[5px]', 'pl-[14px]', 'pl-[24px]', 'pl-[33px]', 'pl-[43px]', 'pl-[52px]', 'pl-[62px]'];
    document.getElementById('tree').innerHTML = nodes.map(([depth, id, text, state]) => {
      const arrow = depth === 0 ? '' :
        `<span class="w-[10px] shrink-0">${state === 'o' ? svg('opened', 'size-[5px]') : state === 'c' ? svg('closed', 'size-[6px]') : ''}</span>`;
      const size = depth < 2 ? 'text-[6px]' : 'text-[7px]';
      const fill = state === 's' ? 'bg-[#0078d7] text-white' : '';
      return `<li role="treeitem" class="flex min-h-0 items-center whitespace-nowrap ${indent[depth]} ${fill}">
        ${arrow}${svg(id, 'mr-[2px] size-[9px] shrink-0')}<span class="${size}">${text}</span></li>`;
    }).join('');
  </script>
</body>
</html>
